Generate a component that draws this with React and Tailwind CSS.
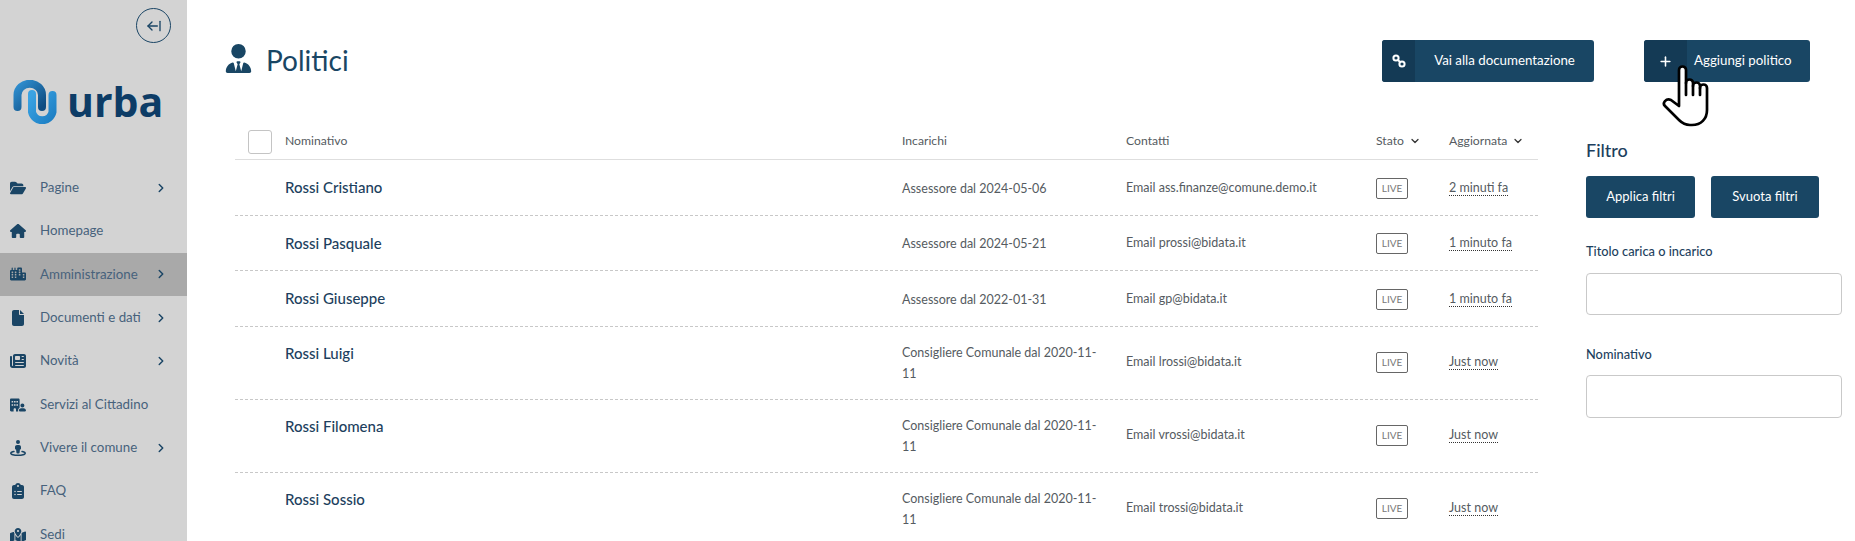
import { ArrowLeftFromLine, ChevronDown, ChevronRight, Plus } from "lucide-react"
import {
  FaBuildingUser,
  FaCity,
  FaClipboardList,
  FaFile,
  FaFolderOpen,
  FaHouse,
  FaMapLocationDot,
  FaNewspaper,
  FaStreetView,
  FaUserTie,
} from "react-icons/fa6"

const menu = [
  { label: "Pagine", icon: FaFolderOpen, sub: true },
  { label: "Homepage", icon: FaHouse },
  { label: "Amministrazione", icon: FaCity, sub: true, active: true },
  { label: "Documenti e dati", icon: FaFile, sub: true },
  { label: "Novità", icon: FaNewspaper, sub: true },
  { label: "Servizi al Cittadino", icon: FaBuildingUser },
  { label: "Vivere il comune", icon: FaStreetView, sub: true },
  { label: "FAQ", icon: FaClipboardList },
  { label: "Sedi", icon: FaMapLocationDot },
]

const rows = [
  { name: "Rossi Cristiano", role: "Assessore dal 2024-05-06", mail: "ass.finanze@comune.demo.it", time: "2 minuti fa" },
  { name: "Rossi Pasquale", role: "Assessore dal 2024-05-21", mail: "prossi@bidata.it", time: "1 minuto fa" },
  { name: "Rossi Giuseppe", role: "Assessore dal 2022-01-31", mail: "gp@bidata.it", time: "1 minuto fa" },
  { name: "Rossi Luigi", role: "Consigliere Comunale dal 2020-11-11", mail: "lrossi@bidata.it", time: "Just now", tall: true },
  { name: "Rossi Filomena", role: "Consigliere Comunale dal 2020-11-11", mail: "vrossi@bidata.it", time: "Just now", tall: true },
  { name: "Rossi Sossio", role: "Consigliere Comunale dal 2020-11-11", mail: "trossi@bidata.it", time: "Just now", tall: true },
]

function Logo() {
  return (
    <div className="flex items-center h-[44px] pl-[13px] gap-[10px]">
      <svg width="44" height="44" viewBox="0 0 44 44" fill="none">
        <defs>
          <linearGradient id="a" x1="0" y1="0" x2="1" y2="1">
            <stop offset="0" stopColor="#2f8fd0" />
            <stop offset="1" stopColor="#0f4c81" />
          </linearGradient>
          <linearGradient id="b" x1="0" y1="0" x2="1" y2="1">
            <stop offset="0" stopColor="#3aa3e3" />
            <stop offset="1" stopColor="#1d7fc4" />
          </linearGradient>
        </defs>
        <path d="M19 14 V32 A10.5 10.5 0 0 0 39.5 32 V15" stroke="url(#b)" strokeWidth="8" strokeLinecap="round" />
        <path d="M4.5 27 V15 A12 11 0 0 1 29 15 V27" stroke="url(#a)" strokeWidth="8" strokeLinecap="round" />
      </svg>
      <span className="font-['Open_Sans',sans-serif] font-bold text-[41px] leading-none text-[#0d3c66] relative top-[-1px]">urba</span>
    </div>
  )
}

function Sidebar() {
  return (
    <aside className="w-[187px] shrink-0 h-full bg-[#d3d3d3] flex flex-col">
      <div className="flex justify-end pt-[8px] pr-[16px]">
        <button className="w-[35px] h-[35px] rounded-full border border-[#1a4565] flex items-center justify-center text-[#1a4565]">
          <ArrowLeftFromLine size={16} strokeWidth={2} />
        </button>
      </div>
      <div className="mt-[37px]">
        <Logo />
      </div>
      <nav className="mt-[42px]">
        {menu.map((m) => (
          <div key={m.label} className={`h-[43.4px] shrink-0 flex items-center pl-[10px] ${m.active ? "bg-[#a9a9a9]" : ""}`}>
            <span className="w-[30px] flex text-[#1a4565]">
              <m.icon size={16} />
            </span>
            <span className="text-[13.3px] text-[#47627c] whitespace-nowrap">{m.label}</span>
            {m.sub && <ChevronRight size={14} strokeWidth={2.5} className="ml-auto mr-[19px] text-[#1a4565]" />}
          </div>
        ))}
      </nav>
    </aside>
  )
}

function LinkIcon() {
  return (
    <svg width="14" height="14" viewBox="0 0 14 14" fill="none" stroke="white" strokeWidth="2">
      <circle cx="4" cy="4" r="2.6" />
      <circle cx="10" cy="10" r="2.6" />
      <path d="M5.5 5.5 L8.5 8.5" />
    </svg>
  )
}

function DarkButton({ icon, label, wide }) {
  return (
    <button className={`h-[42px] flex items-center rounded-[3px] bg-[#194664] text-white text-[13.3px] overflow-hidden ${wide ? "w-[212px]" : "w-[166px]"}`}>
      <span className={`h-full flex items-center justify-center bg-[#143a55] shrink-0 ${wide ? "w-[33px]" : "w-[43px]"}`}>{icon}</span>
      <span className={`flex-1 whitespace-nowrap ${wide ? "text-center" : "text-left pl-[7px]"}`}>{label}</span>
    </button>
  )
}

function Row({ r }) {
  return (
    <div className={`grid grid-cols-[50px_617px_224px_250px_73px_1fr] items-center border-b border-dashed border-[#c8c8c8] ${r.tall ? "h-[73px]" : "h-[55.5px] pt-[2px]"}`}>
      <span />
      <span className={`self-start text-[15px] leading-[22px] font-medium text-[#1d3f5e] ${r.tall ? "mt-[15px]" : "mt-[14px]"}`}>{r.name}</span>
      <span className="text-[12.5px] leading-[21px] text-[#555b61] w-[205px]">{r.role}</span>
      <span className="text-[12.5px] text-[#555b61]">Email {r.mail}</span>
      <span className="flex">
        <span className="inline-flex items-center justify-center w-[32px] h-[21px] rounded-[2px] border border-[#666] text-[10px] text-[#777]">LIVE</span>
      </span>
      <span className="flex">
        <span className="text-[12.5px] text-[#555b61] border-b border-dotted border-[#333] leading-[14px]">{r.time}</span>
      </span>
    </div>
  )
}

function Table() {
  return (
    <div className="w-[1303px]">
      <div className="h-[46px] pt-[10px] grid grid-cols-[50px_617px_224px_250px_73px_1fr] items-center border-b border-[#dedede] text-[12.2px] text-[#555b61]">
        <span className="pl-[13px]">
          <span className="block w-[24px] h-[24px] rounded-[3px] border border-[#c4c4c4]" />
        </span>
        <span>Nominativo</span>
        <span>Incarichi</span>
        <span>Contatti</span>
        <span className="flex items-center gap-[5px]">Stato <ChevronDown size={12} strokeWidth={2.5} className="text-[#333]" /></span>
        <span className="flex items-center gap-[5px]">Aggiornata <ChevronDown size={12} strokeWidth={2.5} className="text-[#333]" /></span>
      </div>
      {rows.map((r) => (
        <Row key={r.name} r={r} />
      ))}
    </div>
  )
}

function Filters() {
  return (
    <div className="w-[256px] ml-[48px] pt-[24px] text-[#1d3f5e]">
      <h2 className="text-[18px] font-medium leading-[24px]">Filtro</h2>
      <div className="flex gap-[16px] mt-[14px]">
        <button className="h-[42px] w-[109px] rounded-[3px] bg-[#194664] text-white text-[13px]">Applica filtri</button>
        <button className="h-[42px] w-[108px] rounded-[3px] bg-[#194664] text-white text-[13px]">Svuota filtri</button>
      </div>
      <label className="block mt-[24px] text-[12.8px] font-medium leading-[18px]">Titolo carica o incarico</label>
      <input className="block mt-[13px] w-full h-[42px] rounded-[4px] border border-[#c9c9c9] bg-white" />
      <label className="block mt-[30px] text-[12.8px] font-medium leading-[18px]">Nominativo</label>
      <input className="block mt-[12px] w-full h-[43px] rounded-[4px] border border-[#c9c9c9] bg-white" />
    </div>
  )
}

// hand cursor that sits over the add button in the picture
function HandCursor() {
  return (
    <svg width="48" height="62" viewBox="0 0 48 62" className="absolute left-[1662px] top-[65px]" fill="white" stroke="black" strokeWidth="2.7" strokeLinejoin="round" strokeLinecap="round">
      <path d="M17 41 V5 a3.5 3.5 0 0 1 7 0 V18 a3.5 3.5 0 0 1 7 0 v3 a3.5 3.5 0 0 1 7 0 v2 a3.5 3.5 0 0 1 7 0 V45 c0 9 -6 15 -15 15 h-2 c-5 0 -8 -2 -11 -5 L3 41 c-3 -3 1 -8 6 -6 Z" />
      <path d="M24 18 V30 M31 21 V30 M38 23 V30" fill="none" />
    </svg>
  )
}

export default function App() {
  return (
    <div className="relative h-screen overflow-hidden flex bg-white font-['Lato',sans-serif]">
      <Sidebar />
      <main className="flex-1 pl-[38px] min-w-0">
        <div className="h-[114px] flex items-start pt-[40px]">
          <FaUserTie size={29} className="text-[#194664] mt-[4px] ml-[-1px]" />
          <h1 className="ml-[13px] text-[28px] leading-[40px] text-[#194664]">Politici</h1>
          <div className="ml-auto flex gap-[50px] mr-[45px]">
            <DarkButton wide label="Vai alla documentazione" icon={<LinkIcon />} />
            <DarkButton label="Aggiungi politico" icon={<Plus size={15} strokeWidth={2.5} />} />
          </div>
        </div>
        <div className="flex pl-[10px]">
          <Table />
          <Filters />
        </div>
      </main>
      <HandCursor />
    </div>
  )
}
